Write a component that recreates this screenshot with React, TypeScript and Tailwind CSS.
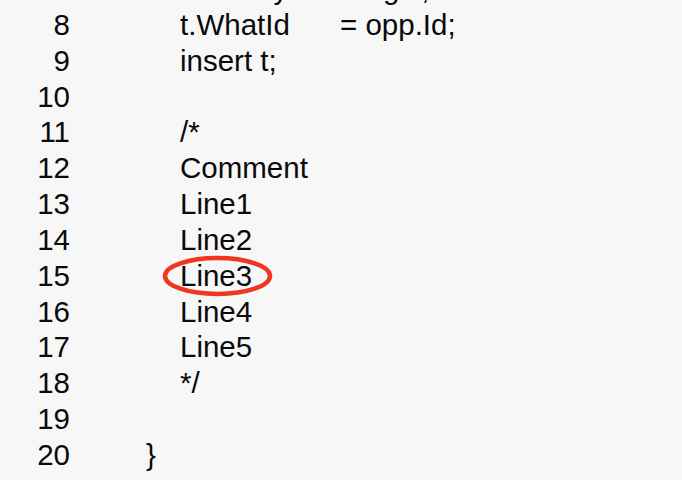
import React from "react";

const rows: { n: number; indent: boolean; content: React.ReactNode }[] = [
  {
    n: 7,
    indent: true,
    content: (
      <>
        <span className="inline-block w-[144px]">t.Priority</span>
        <span>= 'High';</span>
      </>
    ),
  },
  {
    n: 8,
    indent: true,
    content: (
      <>
        <span className="inline-block w-[160px]">t.WhatId</span>
        <span>= opp.Id;</span>
      </>
    ),
  },
  { n: 9, indent: true, content: "insert t;" },
  { n: 10, indent: true, content: "" },
  { n: 11, indent: true, content: "/*" },
  { n: 12, indent: true, content: "Comment" },
  { n: 13, indent: true, content: "Line1" },
  { n: 14, indent: true, content: "Line2" },
  {
    n: 15,
    indent: true,
    content: (
      <span className="relative inline-block">
        Line3
        <svg
          className="absolute left-[-19px] top-[-4px]"
          width="114"
          height="46"
          viewBox="0 0 114 46"
        >
          <ellipse
            cx="56.5"
            cy="22"
            rx="52.5"
            ry="18"
            fill="none"
            stroke="#f03620"
            strokeWidth="4.5"
          />
        </svg>
      </span>
    ),
  },
  { n: 16, indent: true, content: "Line4" },
  { n: 17, indent: true, content: "Line5" },
  { n: 18, indent: true, content: "*/" },
  { n: 19, indent: true, content: "" },
  { n: 20, indent: false, content: "}" },
];

export default function App() {
  return (
    <div
      className="w-[682px] h-[480px] overflow-hidden bg-[#f7f7f7] text-[#0a0a0a] text-[29.5px] leading-[35.83px]"
      style={{ fontFamily: '"Liberation Sans", Arial, sans-serif' }}
    >
      <div className="flex flex-col mt-[-28.9px]">
        {rows.map((r) => (
          <div key={r.n} className="flex h-[35.83px] whitespace-pre">
            <div className="w-[70px] text-right">{r.n}</div>
            <div className={r.indent ? "pl-[110px]" : "pl-[76px]"}>{r.content}</div>
          </div>
        ))}
      </div>
    </div>
  );
}
